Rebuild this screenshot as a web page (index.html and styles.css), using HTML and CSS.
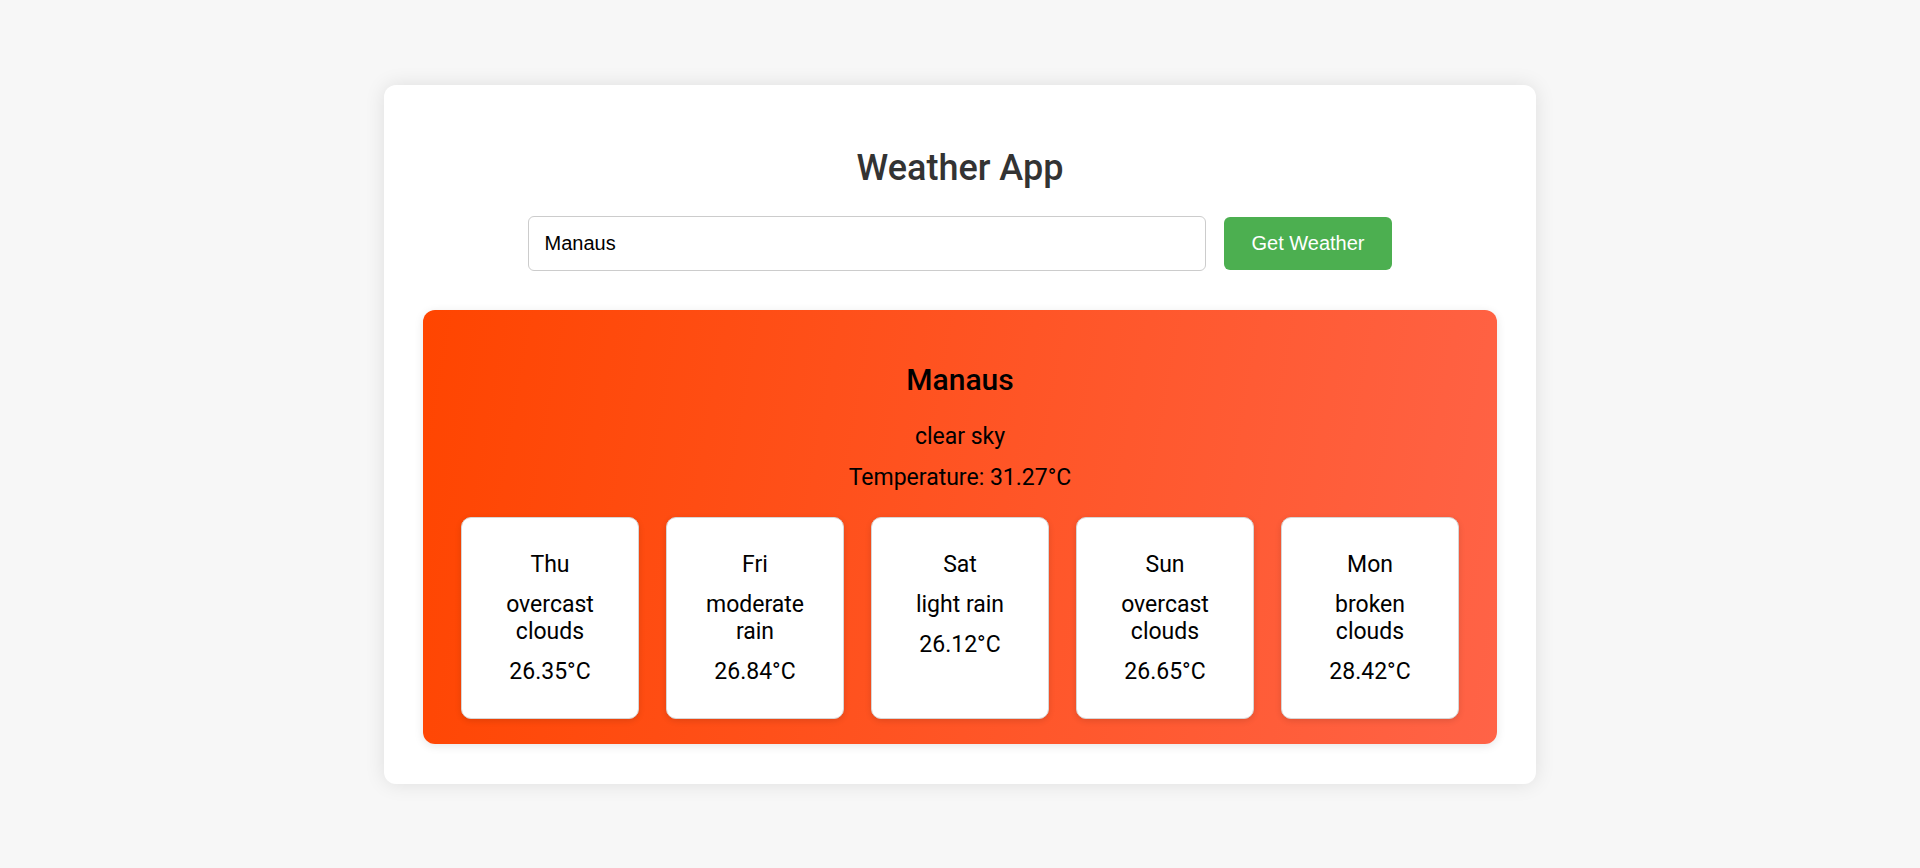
FILE: index.html
```html
<!DOCTYPE html>
<html lang="en">
<head>
<meta charset="utf-8">
<title>Weather App</title>
<link rel="stylesheet" href="styles.css">
</head>
<body>
  <main class="app">
    <h1 class="app-title">Weather App</h1>
    <form class="search">
      <input class="search-input" type="text" value="Manaus">
      <button class="search-btn" type="button">Get Weather</button>
    </form>
    <section class="result">
      <h2 class="city">Manaus</h2>
      <p class="line">clear sky</p>
      <p class="line">Temperature: 31.27°C</p>
      <div class="forecast">
        <div class="day">
          <p class="day-text">Thu</p>
          <p class="day-text">overcast clouds</p>
          <p class="day-text">26.35°C</p>
        </div>
        <div class="day">
          <p class="day-text">Fri</p>
          <p class="day-text">moderate rain</p>
          <p class="day-text">26.84°C</p>
        </div>
        <div class="day">
          <p class="day-text">Sat</p>
          <p class="day-text">light rain</p>
          <p class="day-text">26.12°C</p>
        </div>
        <div class="day">
          <p class="day-text">Sun</p>
          <p class="day-text">overcast clouds</p>
          <p class="day-text">26.65°C</p>
        </div>
        <div class="day">
          <p class="day-text">Mon</p>
          <p class="day-text">broken clouds</p>
          <p class="day-text">28.42°C</p>
        </div>
      </div>
    </section>
  </main>
</body>
</html>
```

FILE: styles.css
```css
* {
  box-sizing: border-box;
}

html, body {
  margin: 0;
  height: 100%;
}

body {
  background: #f7f7f7;
  font-family: Roboto, "Liberation Sans", Arial, sans-serif;
  display: flex;
  align-items: center;
  justify-content: center;
}

.app {
  width: 1152px;
  background: #ffffff;
  border-radius: 12px;
  box-shadow: 0 0 20px rgba(0, 0, 0, 0.1);
  padding: 40px;
  text-align: center;
}

.app-title {
  margin: 22px 0 27px;
  font-size: 36px;
  line-height: 42px;
  font-weight: 500;
  color: #333333;
}

.search {
  display: flex;
  justify-content: center;
  align-items: center;
  gap: 18px;
  margin: 0;
}

.search-input {
  width: 678px;
  height: 55px;
  padding: 15px;
  border: 1px solid #cccccc;
  border-radius: 6px;
  font-family: "Liberation Sans", Arial, sans-serif;
  font-size: 20px;
  color: #000000;
  background: #ffffff;
  outline: none;
}

.search-btn {
  height: 53px;
  padding: 15px 27px;
  border: none;
  border-radius: 6px;
  background: #4caf50;
  color: #ffffff;
  font-family: "Liberation Sans", Arial, sans-serif;
  font-size: 20px;
  line-height: 23px;
}

.result {
  margin: 39px -1px 0;
  padding: 25px 38px 25px;
  border-radius: 12px;
  background: linear-gradient(100deg, #ff4500 0%, #ff6347 100%);
  box-shadow: 0 2px 10px rgba(0, 0, 0, 0.1);
  color: #000000;
  display: flow-root;
}

.city {
  margin: 27px 0 25px;
  font-size: 30px;
  line-height: 36px;
  font-weight: 500;
}

.line {
  margin: 14px 0;
  font-size: 23px;
  line-height: 27px;
}

.forecast {
  display: flex;
  gap: 27px;
  margin-top: 26px;
}

.day {
  flex: 1;
  background: #ffffff;
  border: 1px solid #d6d6d6;
  border-radius: 10px;
  box-shadow: 0 2px 6px rgba(0, 0, 0, 0.12);
  padding: 20px 20px 20px;
}

.day-text {
  margin: 13px 0;
  font-size: 23px;
  line-height: 27px;
}
```
